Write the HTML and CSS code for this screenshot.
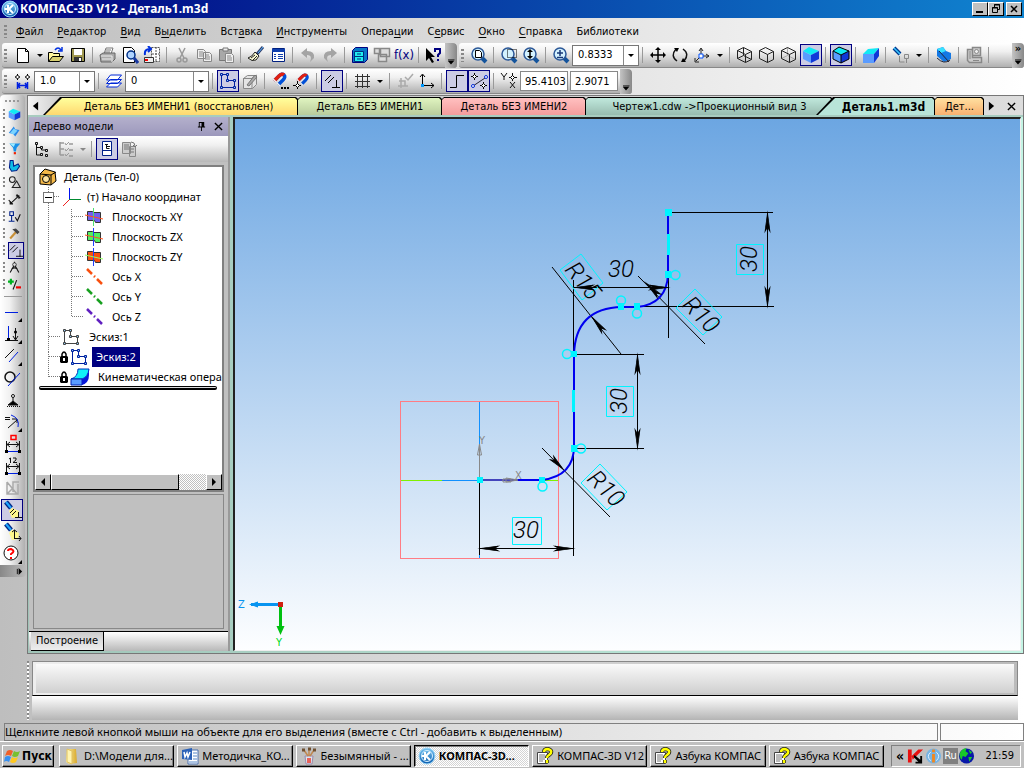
FILE: index.html
```html
<!DOCTYPE html>
<html lang="ru">
<head>
<meta charset="utf-8">
<title>КОМПАС-3D V12 - Деталь1.m3d</title>
<link rel="stylesheet" href="styles.css">
</head>
<body>
<svg class="sprite" aria-hidden="true">
<defs>
<linearGradient id="gb" x2="0" y2="1"><stop stop-color="#7cc8f4"/><stop offset="1" stop-color="#0a5cae"/></linearGradient>
<linearGradient id="gy"><stop stop-color="#fff4a8"/><stop offset="1" stop-color="#d8a82c"/></linearGradient>
<symbol id="logo" viewBox="0 0 18 18"><circle cx="9" cy="9" r="8" fill="url(#gb)" stroke="#9cd8fa"/><circle cx="9" cy="9" r="5.5" fill="none" stroke="#d4efff"/><path d="M7 5v8M12 5 8 9l4 4M4 9h3" stroke="#fff" stroke-width="2" fill="none"/></symbol>
<symbol id="new" viewBox="0 0 18 18"><path d="M3.500 2.500h8l3 3v11h-11z" fill="#fff" stroke="#000"/><path d="M11.500 2.500v3h3" fill="none" stroke="#000"/></symbol>
<symbol id="open" viewBox="0 0 18 18"><path d="M1.500 15.500v-9h4l1 1h6v3" fill="#fff79c" stroke="#000"/><path d="m1.500 15.500 4-5h11l-4 5z" fill="#d8d070" stroke="#000"/><path d="M8 4q3-4 6 0M15 1v4h-4" fill="none" stroke="#0030e0" stroke-width="1.500"/></symbol>
<symbol id="save" viewBox="0 0 18 18"><path d="M2.500 2.500h13v13h-13z" fill="#a09850" stroke="#000"/><path d="M5 3h8v6H5z" fill="#fff"/><path d="M5 11h8v4H5z" fill="#333"/><path d="M10 12h2v3h-2z" fill="#fff"/></symbol>
<symbol id="print" viewBox="0 0 18 18"><path d="m5 8 2-6h7l-2 6M7 4h5M6 6h5" fill="#fff" stroke="#777"/><path d="M1 9 4 7h12v6l-3 3H2z" fill="#aaa" stroke="#666"/><path d="M2 10h11M3 13h9M13 10v6" stroke="#eee"/></symbol>
<symbol id="preview" viewBox="0 0 18 18"><path d="M2.500 1.500h8l3 3v12h-11z" fill="#fff" stroke="#000"/><circle cx="10" cy="9" r="4" fill="#b0d4ff" stroke="#003088" stroke-width="1.500"/><path d="m13 12 4 5" stroke="#1838a0" stroke-width="3"/></symbol>
<symbol id="exch" viewBox="0 0 18 18"><path d="M8.500 1.500h8v14h-8zM13 1v15M9 8h7" fill="#fff" stroke="#555" stroke-dasharray="2 1"/><path d="M2 9q-1-6 5-6M5 0l3 3-3 3" fill="none" stroke="#0030e0" stroke-width="2"/><path d="M1.500 11.500h9v5h-9z" fill="#eee" stroke="#333"/><path d="M2 14h3" stroke="red" stroke-width="2"/></symbol>
<symbol id="cut" viewBox="0 0 18 18"><path d="M6 2l5 10M12 2 7 12" stroke="#999" stroke-width="1.500" fill="none"/><circle cx="6" cy="14" r="2" fill="none" stroke="#999" stroke-width="1.500"/><circle cx="12" cy="14" r="2" fill="none" stroke="#999" stroke-width="1.500"/></symbol>
<symbol id="copy" viewBox="0 0 18 18"><path d="M2.500 3.500h6l2 2v7h-8zM8.500 6.500h6l2 2v7h-8z" fill="#eee" stroke="#888"/><path d="M4 6h4M4 8h4M4 10h4M10 9h4M10 11h5M10 13h5" stroke="#888"/></symbol>
<symbol id="paste" viewBox="0 0 18 18"><path d="M2.500 3.500h12v11h-12z" fill="#a8a8a8" stroke="#777"/><path d="M6 2h5v3H6z" fill="#eee" stroke="#777"/><path d="M8.500 7.500h6l2 2v7h-8z" fill="#eee" stroke="#888"/><path d="M10 10h4M10 12h5M10 14h5" stroke="#888"/></symbol>
<symbol id="brush" viewBox="0 0 18 18"><path d="m16 1-6 7" stroke="#30406c" stroke-width="3"/><path d="m16 1-5 6" stroke="#5ab4ff"/><path d="m8 6 4 4-3 4q-4 2-8-2 4-1 7-6z" fill="#f8f8d0" stroke="#222"/><path d="m4 12 4-3M6 14l4-4" stroke="#222"/></symbol>
<symbol id="props" viewBox="0 0 18 18"><path d="M3.500 2.500h12v13h-12z" fill="#fff" stroke="#002080"/><path d="M3 3h13v3H3z" fill="#1040b0"/><path d="M5 8.500h2M5 10.500h2M5 12.500h2M9 8.500h5M9 10.500h5M9 12.500h5" stroke="#1040b0"/></symbol>
<symbol id="undo" viewBox="0 0 18 18"><path d="m2 7 6-5v3q8 0 7 7l-4 4q3-7-3-7v3z" fill="#a4a4a4"/></symbol>
<symbol id="redo" viewBox="0 0 18 18"><path d="m16 7-6-5v3q-8 0-7 7l4 4q-3-7 3-7v3z" fill="#a4a4a4"/></symbol>
<symbol id="manager" viewBox="0 0 18 18"><path d="m1.500 4.500 3-3h12v12l-3 3h-12z" fill="#0878c8" stroke="#000080"/><path d="M3.500 5.500h9v10h-9zM4 10.500h9" fill="#20f0f0" stroke="#003080"/><path d="M6 8h4M6 13h4" stroke="#003080"/></symbol>
<symbol id="lib" viewBox="0 0 18 18"><path d="M1.500 2.500h5v5h-5zM7.500 2.500h9v8h-9zM5.500 8.500h8v7h-8z" fill="#ddd" stroke="#888" stroke-width="1.500"/></symbol>
<symbol id="zoomd" viewBox="0 0 18 18"><path d="m11 11 5 5" stroke="#14549c" stroke-width="4"/><circle cx="8" cy="8" r="6" fill="#d4f2ff" stroke="#2c5898" stroke-width="1.500"/></symbol>
<symbol id="zall" viewBox="0 0 18 18"><use href="#zoomd"/><path d="M5.500 4.500h4l2 2v5h-6z" fill="#fff" stroke="#000"/></symbol>
<symbol id="zwin" viewBox="0 0 18 18"><use href="#zoomd"/><path d="M7.500 3.500h9v8h-9z" fill="none" stroke="#000" stroke-dasharray="1 1"/></symbol>
<symbol id="zdyn" viewBox="0 0 18 18"><use href="#zoomd"/><path d="M8 4v8" stroke="#000" stroke-width="1.500"/><path d="m8 3 3 3H5zM8 13l-3-3h6z"/></symbol>
<symbol id="zpm" viewBox="0 0 18 18"><use href="#zoomd"/><path d="M5 7h6M8 4v6M5 11.500h6" stroke="#183878" stroke-width="1.500"/></symbol>
<symbol id="help" viewBox="0 0 18 18"><path d="m1 2 9 9H6l3 5-2 1-3-5-3 3z"/><path d="M10 6V3h5v4l-2 2v2m0 2v2" fill="none" stroke="#000080" stroke-width="2"/></symbol>
<symbol id="move" viewBox="0 0 18 18"><path d="M2 9h14M9 2v14" stroke="#000" stroke-width="1.500"/><path d="m1 9 3-3v6zM17 9l-3-3v6zM9 1 6 4h6zM9 17l-3-3h6z"/></symbol>
<symbol id="rot" viewBox="0 0 18 18"><path d="M6 15Q-1 10 5 3M12 3q7 5 1 12" fill="none" stroke="#111" stroke-width="1.500"/><path d="M3 2h5l-2 4zM15 16h-5l2-4z"/></symbol>
<symbol id="axes" viewBox="0 0 18 18"><path d="M8 10V3M8 10h8M8 10l-5 5M6 5l2-3 2 3M13 8l3 2-3 2M2 12v4h4" fill="none" stroke="#222"/><path d="M6 8h4v4H6z" fill="#fff" stroke="#0050ff"/></symbol>
<symbol id="cw" viewBox="0 0 18 18"><path d="m1.500 4.500 6-3 8 4v8l-6 3-8-4zM1.500 4.500l8 4v8M9.500 8.500l6-3M7.500 1.500v8l8 4M7.500 9.500l-6 3" fill="none" stroke="#222"/></symbol>
<symbol id="ch" viewBox="0 0 18 18"><path d="m1.500 4.500 6-3 8 4v8l-6 3-8-4zM1.500 4.500l8 4v8M9.500 8.500l6-3" fill="none" stroke="#222"/></symbol>
<symbol id="cg" viewBox="0 0 18 18"><path d="M7.500 1.500v8l8 4M7.500 9.500l-6 3" stroke="#aaa" fill="none"/><use href="#ch"/></symbol>
<symbol id="cs" viewBox="0 0 18 18"><path d="m1 5 8 4v8l-8-4z" fill="#5a9cff"/><path d="m1 5 6-4 10 4-8 4z" fill="#12eaf4"/><path d="m9 9 8-4v8l-8 4z" fill="#1038d8"/></symbol>
<symbol id="ce" viewBox="0 0 18 18"><use href="#cs"/><path d="m1 5 6-4 10 4v8l-8 4-8-4zM1 5l8 4v8M9 9l8-4" fill="none" stroke="#000"/></symbol>
<symbol id="persp" viewBox="0 0 18 18"><path d="M1 8h11v9H1z" fill="#5a9cff"/><path d="m1 8 5-5 11-1-5 6z" fill="#12eaf4"/><path d="m12 8 5-6v8l-5 7z" fill="#1038d8"/></symbol>
<symbol id="light" viewBox="0 0 18 18"><path d="m2 2 6 6" stroke="#003890" stroke-width="4"/><path d="m2 2 6 6" stroke="#38c8ff" stroke-width="1.500"/><path d="M7.500 10v6h5M12.500 8.500h4v4h-4zM14.500 13v4" fill="none" stroke="#888"/></symbol>
<symbol id="view" viewBox="0 0 18 18"><path d="m2 3 6-2 3 4 5 2v6l-7 3-7-6z" fill="#1478e4"/><path d="m2 3 6-2 3 4-5 2z" fill="#38e0ff"/><path d="M2 12q7 7 13 2M4 5l10 11" fill="none" stroke="#223"/></symbol>
<symbol id="engine" viewBox="0 0 18 18"><path d="M2.500 3.500h5v8h9v5h-12l-2-2zM7.500 1.500h8v8h-8z" fill="#ccc" stroke="#888" stroke-width="1.500"/><path d="M5 5v8M8 14.500h6" stroke="#888"/><circle cx="11.500" cy="5.500" r="2" fill="#eee" stroke="#888"/></symbol>
<symbol id="step" viewBox="0 0 18 18"><path d="M1 5h5M3.500 2v6M11 5h5M13.500 2v6" stroke="#000"/><path d="m3.500 3 2 2-2 2-2-2zM13.500 3l2 2-2 2-2-2z" fill="#fff" stroke="#000"/><path d="M3.500 10v7M13.500 10v7M4 13.500h9M6 11l-2 2.500L6 16M11 11l2 2.500-2 2.500" fill="none" stroke="#0020e0" stroke-width="1.500"/></symbol>
<symbol id="layers" viewBox="0 0 18 18"><path d="m1.500 15 4-4h11l-4 4zM1.500 11.500l4-4h11l-4 4zM1.500 8l4-5h11l-4 5z" fill="#fff" stroke="#0028d8"/></symbol>
<symbol id="sketch" viewBox="0 0 18 18"><path d="M2.500 2.500h6v6h7v7h-13z" fill="none" stroke="currentColor"/><path d="M1.500 1.500h2v2h-2zM7.500 1.500h2v2h-2zM7.500 7.500h2v2h-2zM14.500 7.500h2v2h-2zM1.500 14.500h2v2h-2zM14.500 14.500h2v2h-2z" fill="#8ac8f4" stroke="currentColor"/></symbol>
<symbol id="editbox" viewBox="0 0 18 18"><path d="m2.500 6.500 4-3h9v9l-4 4h-9zM2 6.500h9v10M11 6l5-3" fill="#e4e4e4" stroke="#888"/><path d="M6 13 14 3l2 2-8 9z" fill="#aaa" stroke="#777"/></symbol>
<symbol id="magnet" viewBox="0 0 18 18"><path d="m3 9 5-5q3-3 5-1t-1 5l-5 5" fill="none" stroke="#0050d8" stroke-width="3.500"/><path d="m3 9 5-5q3-3 5-1" fill="none" stroke="#e02010" stroke-width="3.500"/><path d="m2 7 3 3M6 11l3 3" stroke="#eee" stroke-width="1.500"/></symbol>
<symbol id="mdots" viewBox="0 0 18 18"><use href="#magnet"/><path d="M10 16h2M13 16h2M16 16h2" stroke="#000" stroke-width="2"/></symbol>
<symbol id="mplus" viewBox="0 0 18 18"><use href="#magnet" x="2" width="16" height="18"/><path d="M0 13.500h8M4.500 9v8" stroke="#000"/><path d="m4.500 11.500 2 2-2 2-2-2z" fill="#fff" stroke="#000"/></symbol>
<symbol id="perp" viewBox="0 0 18 18"><path d="m2 9 6-6M5 11l6-6M9 15.500h8M13.500 8v8" stroke="#000" fill="none"/></symbol>
<symbol id="grid" viewBox="0 0 18 18"><path d="M4.500 2v14M9.500 2v14M14.500 2v14M2 4.500h15M2 9.500h15M2 14.500h15" stroke="#333"/></symbol>
<symbol id="lcs0" viewBox="0 0 18 18"><path d="M2 14h10M5 6v10M3 9h6v5M9 5l3 3 5-6" fill="none" stroke="#aaa" stroke-width="1.500"/></symbol>
<symbol id="lcs" viewBox="0 0 18 18"><path d="M4.500 14V3M4 13.500h12M2 5l2.500-3L7 5M13 11l3 2.500L13 16" fill="none" stroke="#000"/><path d="M3 12h3v3H3z" fill="#09f"/></symbol>
<symbol id="ortho" viewBox="0 0 18 18"><path d="M2 15.500h6.500v-12H16" fill="none" stroke="#000"/></symbol>
<symbol id="snap" viewBox="0 0 18 18"><path d="m3 14 12-8" stroke="#223"/><circle cx="3" cy="14" r="1.500" fill="#fff" stroke="#0028d8"/><circle cx="16" cy="5" r="1.500" fill="#fff" stroke="#0028d8"/><path d="M1 4.500h7M4.500 1v7M10 13.500h7M13.500 10v7" stroke="#000"/><path d="m4.500 2.500 2 2-2 2-2-2zM13.500 11.500l2 2-2 2-2-2z" fill="#fff" stroke="#000"/></symbol>
<symbol id="yx" viewBox="0 0 18 18"><path d="m1 1 3 4 3-4M4 5v3M10 10l5 6M15 10l-5 6M9 5.500h8M12.500 1v8" fill="none" stroke="#111"/><path d="m12.500 3.500 2 2-2 2-2-2z" fill="#fff" stroke="#000"/></symbol>
<symbol id="surf" viewBox="0 0 18 18"><path d="m1 11 7-9 2 4 6 1-6 9-3-4z" fill="#2888e8"/><path d="m3 11 5-6 5 3-5 5z" fill="#7ad4ff"/></symbol>
<symbol id="funnel" viewBox="0 0 18 18"><path d="M2 2h15l-5 6-1 5H8L7 8z" fill="#1890e8"/><path d="M2 2h8l-2 5z" fill="#9cecff"/><path d="M8 14h3v3H8z" fill="#f02000"/></symbol>
<symbol id="sheet" viewBox="0 0 18 18"><path d="M3 2h4l1 8 6-3 2 3-4 6-7 1-3-5z" fill="#10bce8" stroke="#001c88" stroke-width="1.500"/></symbol>
<symbol id="geom" viewBox="0 0 18 18"><circle cx="6" cy="5" r="4" fill="none" stroke="#222" stroke-width="1.500"/><path d="m12 7 5 9H6z" fill="none" stroke="#222" stroke-width="1.500"/></symbol>
<symbol id="dim" viewBox="0 0 18 18"><path d="M3 15 15 4M1 10l5 5M12 2l5 5M3 11v4h4M11 4h4v4" fill="none" stroke="#111" stroke-width="1.500"/></symbol>
<symbol id="mark" viewBox="0 0 18 18"><path d="M2.500 2.500h5v5h-5zM5 8v7M1 15.500h8" fill="none" stroke="#002088" stroke-width="1.500"/><path d="m10 10 3 5 4-9" fill="none" stroke="#111" stroke-width="1.500"/></symbol>
<symbol id="hammer" viewBox="0 0 18 18"><path d="M3 16 12 6" stroke="#c89038" stroke-width="3"/><path d="m6 3 5-1 5 5-3 3-4-4z" fill="#444"/></symbol>
<symbol id="compass" viewBox="0 0 18 18"><path d="M9 1v3M9 5 3 16M9 5l6 11M5 11q4-3 8 0" fill="none" stroke="#111" stroke-width="1.500"/><circle cx="9" cy="5" r="2.500" fill="#ddd" stroke="#111"/></symbol>
<symbol id="pm" viewBox="0 0 18 18"><path d="M0 5h8M4 1v8" stroke="#00b020" stroke-width="3"/><path d="M12 3 7 16" stroke="#111" stroke-width="1.500"/><path d="M11 13h7" stroke="#f00000" stroke-width="3"/></symbol>
<symbol id="cor" viewBox="0 0 22 22"><path d="M21 17v4h-4z"/></symbol>
<symbol id="l1" viewBox="0 0 22 22"><path d="M4 11.500h13" stroke="#0020e0"/><use href="#cor"/></symbol>
<symbol id="l2" viewBox="0 0 22 22"><path d="M7.500 3v14M14.500 5v13M4 17.500h13M12 13l2.500 4 2.500-4" fill="none" stroke="#111"/><path d="M7.500 3v12" stroke="#0020e0"/><circle cx="14.500" cy="9" r="1.500"/><path d="M6 15h3v3H6z"/><use href="#cor"/></symbol>
<symbol id="l3" viewBox="0 0 22 22"><path d="M4 13 13 4" stroke="#111"/><path d="m8 17 9-10" stroke="#0020e0"/><use href="#cor"/></symbol>
<symbol id="l4" viewBox="0 0 22 22"><circle cx="9" cy="10" r="5" fill="none" stroke="#111" stroke-width="1.500"/><path d="M7 19 19 6" stroke="#0020e0"/></symbol>
<symbol id="l5" viewBox="0 0 22 22"><path d="M12 8v4l-5 4h10l-5-4" stroke="#111"/><circle cx="12" cy="7" r="1.500" fill="#fff" stroke="#111"/><path d="M6 17.500h13" stroke="#111" stroke-dasharray="1 1"/></symbol>
<symbol id="l6" viewBox="0 0 22 22"><path d="M4 6.500h5M4 8.500h5M7 17l9-8M11 8h5v4" fill="none" stroke="#111"/><path d="M10 4q9 3 7 12" fill="none" stroke="#0020e0"/><use href="#cor"/></symbol>
<symbol id="l7" viewBox="0 0 22 22"><path d="M5.500 8v12M18.500 8v12M6 11.500h12M9 9l-3 2.500L9 14M15 9l3 2.500-3 2.500" fill="none" stroke="#111"/><path d="M6 18.500h12" stroke="#0020e0"/><path d="M4 17h3v3H4zM17 17h3v3h-3z"/></symbol>
<symbol id="l7a" viewBox="0 0 22 22"><use href="#l7"/><path d="M10 2.500h5v4h-5z" fill="none" stroke="red" stroke-width="1.500"/></symbol>
<symbol id="l8" viewBox="0 0 22 22"><use href="#l7"/><path d="m8 4 1.500-1v5M12 3h3v2l-3 2.500h4" fill="none" stroke="#111"/></symbol>
<symbol id="l9" viewBox="0 0 22 22"><path d="M6 5v12h11V7M6 17l6-6M6 5l10 12M12 15V5h6" fill="none" stroke="#aaa" stroke-width="1.500"/></symbol>
<symbol id="torch" viewBox="0 0 22 22"><path d="m11 9 7 3-1 6-6 1-3-7z" fill="#fff88c"/><path d="m5 3 5 6" stroke="#002888" stroke-width="5"/><path d="m5 3 5 6" stroke="#20a8ff" stroke-width="2"/></symbol>
<symbol id="l10" viewBox="0 0 22 22"><use href="#torch"/><path d="m9 14 4-4M11 16l4-4M14 18.500h7M17.500 13v6" stroke="#111"/></symbol>
<symbol id="l11" viewBox="0 0 22 22"><use href="#torch"/><path d="M13.500 18V9M13 17.500h7M11 11l2.500-2 2.500 2M18 15l2 2.500-2 2.500" fill="none" stroke="#111"/></symbol>
<symbol id="l12" viewBox="0 0 22 22"><circle cx="10" cy="10" r="7" fill="#fff" stroke="#111"/><path d="M7 8q0-2 3-2 5 2 0 5v1m0 2v2" fill="none" stroke="red" stroke-width="2"/><use href="#cor"/></symbol>
<symbol id="tree" viewBox="0 0 18 18"><path d="M4.500 4v11h5M5 7.500h3M9.500 8v2h5" fill="none" stroke="#111"/><path d="M3.500 2.500h2v2h-2zM8.500 6.500h2v2h-2zM13.500 9.500h2v2h-2zM8.500 13.500h2v2h-2zM13.500 14.500h2v2h-2z" fill="#ddd" stroke="#111"/></symbol>
<symbol id="list" viewBox="0 0 18 18"><path d="M3 2v13M3 3h4M3 9h4M3 15h4M12 4h4M12 10h4M12 16h4" stroke="#999" stroke-width="1.500"/><path d="m8 3 1 2 3-3M8 9l1 2 3-3M8 14l1 2 3-3" fill="none" stroke="#999"/></symbol>
<symbol id="split" viewBox="0 0 18 18"><path d="M4.500 1.500h9v14h-9zM5 10.500h9" fill="#fff" stroke="#002088"/><path d="M7 4.500h3M8.500 5v3.500h3M9 6.500h3" fill="none" stroke="#111"/></symbol>
<symbol id="rel" viewBox="0 0 18 18"><path d="M2.500 2.500h8v11h-8zM9.500 6.500h6v10h-6z" fill="#ccc" stroke="#888"/><path d="M4 5h5M4 7h5M4 9h5M11 9h3M11 12h3M11 2q4 0 4 4m-2-1 2 2 2-2" fill="none" stroke="#777"/></symbol>
<symbol id="part" viewBox="0 0 18 18"><path d="m1 6 5-5 10 3 1 9-5 4-11-1z" fill="#f4b848" stroke="#000"/><path d="m1 6 11 1 5-3M12 7v10" fill="none" stroke="#000"/><circle cx="7" cy="11" r="3.500" fill="#ffe4a0" stroke="#000"/></symbol>
<symbol id="origin" viewBox="0 0 18 18"><path d="M6.500 0v11" stroke="#0010f0"/><path d="M6 11.500h12" stroke="#008a30"/><path d="m6 12-6 6" stroke="#f02020"/></symbol>
<symbol id="plane" viewBox="0 0 18 18"><path d="M2.500 3.500h5l1 1h7v10h-5l-1-2h-7z" fill="currentColor" stroke="#333"/></symbol>
<symbol id="axis" viewBox="0 0 18 18"><path d="m2 1 5 5M9 8l1 1M12 11l5 5" stroke="currentColor" stroke-width="2.500"/></symbol>
<symbol id="lock" viewBox="0 0 8 14"><path d="M2 7V4q2-4 4 0v3" fill="none" stroke="#000" stroke-width="1.500"/><path d="M1 6h6l1 1v5l-1 1H1l-1-1V7z"/><path d="M3 8h2v3H3z" fill="#fff"/></symbol>
<symbol id="kin" viewBox="0 0 20 18"><path d="M1 11q7-2 7-10h11q-1 8-7 10z" fill="#10f0f8" stroke="#0030c0"/><path d="M1 11h11v6H1z" fill="#5a9cff" stroke="#0020b0"/><path d="M12 11q6-2 7-10v6q0 8-7 10z" fill="#0818d8"/></symbol>
<symbol id="win" viewBox="0 0 18 18"><path d="M3 4q3-2 6 0L7 9Q4 7 1 9z" fill="#f06028"/><path d="M10 4q3 2 6 0l-2 5q-3 2-6 0z" fill="#78c030"/><path d="M1 10q3-2 6 0l-2 5q-3-2-5 0z" fill="#3890f0"/><path d="M8 10q3 2 6 0l-2 5q-3 2-6 0z" fill="#ffc820"/></symbol>
<symbol id="folder" viewBox="0 0 18 18"><path d="M4 2h9l1 14-8 1-3-2z" fill="url(#gy)"/><path d="m4 2 5 2v13l-5-2z" fill="#fff4b0" stroke="#e0c060"/></symbol>
<symbol id="word" viewBox="0 0 18 18"><path d="M7 3h10v14H7z" fill="#fff" stroke="#4870b0"/><path d="M12 6h4M12 9h4M12 12h4M8 15h8" stroke="#5888c8"/><path d="m1 3 10-2v12L1 12z" fill="#2c62b8"/><path d="m3 5 1 5 2-4 1 4 2-5" fill="none" stroke="#fff" stroke-width="1.500"/></symbol>
<symbol id="paint" viewBox="0 0 18 18"><path d="M5 9h8l-1 8H6z" fill="#dce4ec" stroke="#98a"/><path d="M7 11h4v5H7z" fill="#e86058"/><path d="M8 9 4 3M9 9V2M10 9l4-6" stroke="#c08850" stroke-width="1.500"/><path d="M2 3h3M13 3h3M8 2h3" stroke="#705030" stroke-width="3"/></symbol>
<symbol id="hlp" viewBox="0 0 18 18"><path d="M1.500 5.500h10v11h-10z" fill="#fff" stroke="#444"/><path d="M3 8h6M3 10h6M3 12h6M3 14h4" stroke="#777"/><path d="M8 5q0-3 4-3 6 2 1 6-2 1-2 3m0 2v3" fill="none" stroke="#222" stroke-width="4"/><path d="M8 5q0-3 4-3 6 2 1 6-2 1-2 3m0 2v3" fill="none" stroke="#ff0" stroke-width="2.500"/></symbol>
<symbol id="kav" viewBox="0 0 18 18"><path d="M1 2h4v14H1zM5 9l7-7h5L6 13z" fill="#e81010"/><path d="m8 8 6 5V9h2v8H9v-2h3L7 10z"/></symbol>
<symbol id="info" viewBox="0 0 18 18"><circle cx="9" cy="9" r="8" fill="#78b4e4"/><path d="M6 5q-5 4 0 9M12 5q5 4 0 9" fill="none" stroke="#e4f4ff"/><path d="M9 2v3M9 7v9" stroke="#f08820" stroke-width="3"/></symbol>
<symbol id="globe" viewBox="0 0 18 18"><circle cx="9" cy="9" r="8" fill="#0818a8"/><path d="M3 4q3-4 6-3l-1 3 3 2-3 4-3-1-1 4q-3-3-2-7z" fill="#18c828"/><path d="M11 10h4l-3 5zM11 2l4 3-2 2z" fill="#18c828"/></symbol>
<path id="ar" d="m0 0-13-3.500 3 3.500-3 3.500z"/>
</defs>
</svg>

<div class="app">
<header class="title"><svg class="i"><use href="#logo"/></svg><h1>КОМПАС-3D V12 - Деталь1.m3d</h1>
<div class="winbtns"><button aria-label="Свернуть"><svg viewBox="0 0 14 12"><path d="M3 9h7" stroke="#000" stroke-width="2"/></svg></button><button aria-label="Восстановить"><svg viewBox="0 0 14 12"><path d="M5.500 4V1.500h5v5H9M3.500 4.500h5v5h-5zM5 2h6M3 5h6" fill="none" stroke="#000"/></svg></button><button class="x" aria-label="Закрыть"><svg viewBox="0 0 14 12"><path d="m4 3 6 6M10 3 4 9" stroke="#000" stroke-width="1.500"/></svg></button></div></header>

<nav class="menu"><i class="grip"></i><a href="#"><u>Ф</u>айл</a><a href="#"><u>Р</u>едактор</a><a href="#"><u>В</u>ид</a><a href="#">В<u>ы</u>делить</a><a href="#">Вст<u>а</u>вка</a><a href="#"><u>И</u>нструменты</a><a href="#">Опера<u>ц</u>ии</a><a href="#">С<u>е</u>рвис</a><a href="#"><u>О</u>кно</a><a href="#"><u>С</u>правка</a><a href="#">Библиотеки</a></nav>

<div class="bars">
<div class="bar"><i class="grip"></i>
<button aria-label="Создать"><svg class="i"><use href="#new"/></svg></button><i class="dd"></i>
<button aria-label="Открыть"><svg class="i"><use href="#open"/></svg></button>
<button aria-label="Сохранить"><svg class="i"><use href="#save"/></svg></button><i class="sep"></i>
<button aria-label="Печать"><svg class="i"><use href="#print"/></svg></button>
<button aria-label="Предварительный просмотр"><svg class="i"><use href="#preview"/></svg></button>
<button aria-label="Обмен"><svg class="i"><use href="#exch"/></svg></button><i class="sep"></i>
<button aria-label="Вырезать"><svg class="i"><use href="#cut"/></svg></button>
<button aria-label="Копировать"><svg class="i"><use href="#copy"/></svg></button>
<button aria-label="Вставить"><svg class="i"><use href="#paste"/></svg></button><i class="sep"></i>
<button aria-label="Копировать свойства"><svg class="i"><use href="#brush"/></svg></button>
<button aria-label="Свойства"><svg class="i"><use href="#props"/></svg></button><i class="sep"></i>
<button aria-label="Отменить"><svg class="i"><use href="#undo"/></svg></button>
<button aria-label="Повторить"><svg class="i"><use href="#redo"/></svg></button><i class="sep"></i>
<button aria-label="Менеджер"><svg class="i"><use href="#manager"/></svg></button>
<button aria-label="Библиотеки"><svg class="i"><use href="#lib"/></svg></button>
<button class="fx">f(x)</button><i class="sep"></i>
<button aria-label="Что это"><svg class="i"><use href="#help"/></svg></button><i class="more"></i></div>
<div class="bar grow"><i class="grip"></i>
<button aria-label="Показать все"><svg class="i"><use href="#zall"/></svg></button><i class="sep"></i>
<button aria-label="Увеличить рамкой"><svg class="i"><use href="#zwin"/></svg></button>
<button aria-label="Приблизить"><svg class="i"><use href="#zdyn"/></svg></button><i class="sep"></i>
<button aria-label="Масштаб"><svg class="i"><use href="#zpm"/></svg></button>
<span class="combo w66"><select aria-label="Текущий масштаб"><option>0.8333</option></select></span><i class="sep"></i>
<button aria-label="Сдвинуть"><svg class="i"><use href="#move"/></svg></button>
<button aria-label="Повернуть"><svg class="i"><use href="#rot"/></svg></button>
<button aria-label="Ориентация"><svg class="i"><use href="#axes"/></svg></button><i class="dd wide"></i><i class="sep"></i>
<button aria-label="Каркас"><svg class="i"><use href="#cw"/></svg></button>
<button aria-label="Без невидимых линий"><svg class="i"><use href="#ch"/></svg></button>
<button aria-label="Невидимые линии тонкие"><svg class="i"><use href="#cg"/></svg></button>
<button class="on" aria-label="Полутоновое"><svg class="i"><use href="#cs"/></svg></button><i class="sep"></i>
<button class="on" aria-label="Полутоновое с каркасом"><svg class="i"><use href="#ce"/></svg></button><i class="sep"></i>
<button aria-label="Перспектива"><svg class="i"><use href="#persp"/></svg></button><i class="sep"></i>
<button aria-label="Подсветка"><svg class="i"><use href="#light"/></svg></button><i class="dd wide"></i><i class="sep"></i>
<button aria-label="Перестроить"><svg class="i"><use href="#view"/></svg></button><i class="sep"></i>
<button aria-label="Сборка"><svg class="i"><use href="#engine"/></svg></button><i class="sep"></i><i class="more end"></i></div>
</div>

<div class="bars">
<div class="bar"><i class="grip"></i>
<button aria-label="Шаг курсора"><svg class="i"><use href="#step"/></svg></button>
<span class="combo w60"><select aria-label="Шаг"><option>1.0</option></select></span><i class="sep"></i>
<button aria-label="Слои"><svg class="i"><use href="#layers"/></svg></button>
<span class="combo w84"><select aria-label="Слой"><option>0</option></select></span><i class="sep"></i>
<button class="on" aria-label="Эскиз"><svg class="i blue"><use href="#sketch"/></svg></button>
<button aria-label="Разместить эскиз"><svg class="i"><use href="#editbox"/></svg></button><i class="sep"></i>
<button aria-label="Настройка привязок"><svg class="i"><use href="#mdots"/></svg></button>
<button aria-label="Привязки"><svg class="i"><use href="#mplus"/></svg></button><i class="sep"></i>
<button class="on" aria-label="Ограничения"><svg class="i"><use href="#perp"/></svg></button><i class="sep"></i>
<button aria-label="Сетка"><svg class="i"><use href="#grid"/></svg></button><i class="dd wide"></i><i class="sep"></i>
<button aria-label="Управление СК"><svg class="i"><use href="#lcs0"/></svg></button>
<button aria-label="Локальная СК"><svg class="i"><use href="#lcs"/></svg></button><i class="sep"></i>
<button class="on" aria-label="Ортогональное черчение"><svg class="i"><use href="#ortho"/></svg></button>
<button class="on" aria-label="Округление"><svg class="i"><use href="#snap"/></svg></button><i class="sep"></i>
<span class="ico"><svg class="i"><use href="#yx"/></svg></span>
<input aria-label="X" value="95.4103"><input aria-label="Y" value="2.9071"><i class="more"></i></div>
</div>

<main>
<aside class="side">
<div class="strip">
<i class="hgrip"></i>
<button class="s" aria-label="Редактирование детали"><svg class="i"><use href="#cs"/></svg></button><button class="s" aria-label="Пространственные кривые"><svg class="i"><use href="#surf"/></svg></button><button class="s" aria-label="Фильтры"><svg class="i"><use href="#funnel"/></svg></button><button class="s" aria-label="Листовое тело"><svg class="i"><use href="#sheet"/></svg></button><button class="s" aria-label="Геометрия"><svg class="i"><use href="#geom"/></svg></button><button class="s" aria-label="Размеры"><svg class="i"><use href="#dim"/></svg></button><button class="s" aria-label="Обозначения"><svg class="i"><use href="#mark"/></svg></button><button class="s" aria-label="Редактирование"><svg class="i"><use href="#hammer"/></svg></button><button class="s sel" aria-label="Параметризация"><svg class="i"><use href="#perp"/></svg></button><button class="s" aria-label="Измерения"><svg class="i"><use href="#compass"/></svg></button><button class="s" aria-label="Выделение"><svg class="i"><use href="#pm"/></svg></button>
<i class="hline"></i>
<button aria-label="Горизонталь"><svg><use href="#l1"/></svg></button><button aria-label="Выравнивание"><svg><use href="#l2"/></svg></button><button aria-label="Параллельность"><svg><use href="#l3"/></svg></button><button aria-label="Касание"><svg><use href="#l4"/></svg></button><button aria-label="Фиксация"><svg><use href="#l5"/></svg></button><button aria-label="Равенство"><svg><use href="#l6"/></svg></button><button aria-label="Фиксировать размер"><svg><use href="#l7a"/></svg></button><button aria-label="Значение размера"><svg><use href="#l8"/></svg></button><button aria-label="Параметризовать"><svg><use href="#l9"/></svg></button><button class="on" aria-label="Показать ограничения"><svg><use href="#l10"/></svg></button><button aria-label="Степени свободы"><svg><use href="#l11"/></svg></button><button aria-label="Справка по ограничениям"><svg><use href="#l12"/></svg></button>
</div><div class="endcap"><svg viewBox="0 0 8 8"><path d="M1.500 1v6" stroke="#000"/><path d="m3 0 4 4-4 4z"/></svg></div>
</aside>

<section class="doc">
<div class="tabs"><button class="arr" aria-label="Назад"><svg viewBox="0 0 8 10"><path d="M7 0v10L1 5z"/></svg></button>
<button class="tab slant yellow"><span>Деталь БЕЗ ИМЕНИ1 (восстановлен)</span></button><button class="tab green"><span>Деталь БЕЗ ИМЕНИ1</span></button><button class="tab pink"><span>Деталь БЕЗ ИМЕНИ2</span></button><button class="tab teal"><span>Чертеж1.cdw -&gt;Проекционный вид 3</span></button><button class="tab slant active"><span>Деталь1.m3d</span></button><button class="tab orange"><span>Дет...</span></button>
<button class="arr r" aria-label="Вперёд"><svg viewBox="0 0 8 10"><path d="M1 0v10l6-5z"/></svg></button><button class="arr c" aria-label="Закрыть документ"><svg viewBox="0 0 8 10"><path d="m0 1 8 8M8 1 0 9" stroke="#000" stroke-width="1.500"/></svg></button></div>
<div class="work">
<section class="panel">
<div class="phead"><h2>Дерево модели</h2><svg viewBox="0 0 10 10"><path d="M2 0h6v5h1v1H5.500v4h-1V6H1V5h1zM3 1v4h2V1z" fill-rule="evenodd"/></svg><svg viewBox="0 0 10 10"><path d="m1 1 8 8M9 1 1 9" stroke="#000" stroke-width="1.500"/></svg></div>
<div class="ptools"><button aria-label="Дерево"><svg class="i"><use href="#tree"/></svg></button><button aria-label="Состав"><svg class="i"><use href="#list"/></svg></button><i class="dd dim"></i><i class="sep"></i><button class="on" aria-label="Отношения"><svg class="i"><use href="#split"/></svg></button><button aria-label="Окно дерева"><svg class="i"><use href="#rel"/></svg></button></div>
<div class="box treebox">
<div class="tree">
<svg class="guides"><path d="M13.500 20v165M36.500 42v108M19 29.500h6M37 49.500h12M37 69.500h12M37 89.500h12M37 109.500h12M37 129.500h12M37 149.500h12M14 169.500h12M14 189.500h11M14 209.500h11M13.500 185v25" fill="none" stroke="#777" stroke-dasharray="1 1"/></svg>
<ul>
<li class="l0"><svg class="i"><use href="#part"/></svg><span>Деталь (Тел-0)</span></li>
<li class="l1"><i class="exp"></i><svg class="i"><use href="#origin"/></svg><span>(т) Начало координат</span></li>
<li class="l2"><svg class="i pv"><use href="#plane"/><path d="M8.500 0v18" stroke="#50e070"/><path d="m0 7 18 4" stroke="#ff5020"/></svg><span>Плоскость XY</span></li>
<li class="l2"><svg class="i pg"><use href="#plane"/><path d="M8.500 0v18" stroke="#2040ff"/><path d="m0 7 18 4" stroke="#ff5020"/></svg><span>Плоскость ZX</span></li>
<li class="l2"><svg class="i po"><use href="#plane"/><path d="M8.500 0v18" stroke="#2040ff"/><path d="m0 7 18 4" stroke="#90ff60"/></svg><span>Плоскость ZY</span></li>
<li class="l2"><svg class="i po"><use href="#axis"/></svg><span>Ось X</span></li>
<li class="l2"><svg class="i ag"><use href="#axis"/></svg><span>Ось Y</span></li>
<li class="l2"><svg class="i av"><use href="#axis"/></svg><span>Ось Z</span></li>
<li class="l3"><svg class="i gray"><use href="#sketch"/></svg><span>Эскиз:1</span></li>
<li class="l4"><svg class="lock"><use href="#lock"/></svg><svg class="i blue"><use href="#sketch"/></svg><span class="hl">Эскиз:2</span></li>
<li class="l4"><svg class="lock"><use href="#lock"/></svg><svg class="kin"><use href="#kin"/></svg><span>Кинематическая операция</span></li>
</ul>
<div class="stop"></div>
</div>
<div class="scroll"><button aria-label="Влево"><svg viewBox="0 0 8 10"><path d="M6 1v8L2 5z"/></svg></button><i class="thumb"></i><i class="track"></i><button aria-label="Вправо"><svg viewBox="0 0 8 10"><path d="M2 1v8l4-4z"/></svg></button></div>
</div>
<div class="box lower"></div>
<div class="ptabs"><button>Построение</button></div>
</section>

<div class="view">
<svg class="canvas" aria-label="Эскиз"><g transform="translate(-235 -119)" fill="none" stroke="#000">
<path d="M401 480.500h158" stroke="#80f000"/><path d="M442 480.500h38M479.500 402v156" stroke="#1090ff"/>
<path d="M479.500 480v75M573.500 352v204M479 548.500h95M574 354.500h70M574 448.500h70M637.500 354v94M574 287.500h94M573.500 280v74M669 212.500h104M767.500 212v94M636 306.500h138M668.500 212v126M552 267l69 87M638 276l67 68M542 448l68 69"/>
<rect x="400.500" y="401.500" width="158" height="157" stroke="#ff7c84" shape-rendering="crispEdges"/>
<path d="M480 480h62q32-4 32-34V355q1-47 48-48h15q30-3 31-33v-62" stroke="#0000f0" stroke-width="2"/>
<path d="M573.500 390v22M668.500 234v21" stroke="#00f4ff" stroke-width="3"/>
<path d="M480 480h37M479.500 480v-36" stroke="#888"/><path d="m518 480-12-2v4zM479.500 444l-2 11h4zM503 479h8v3h-8z" stroke="#888"/>
<g fill="#00f4ff" stroke="none"><path d="M477 477h6v6h-6zM539 477h6v6h-6zM571 445h6v7h-6zM571 351h6v6h-6zM618 303h6v7h-6zM634 303h6v7h-6zM665 271h6v7h-6zM665 209h7v7h-7z"/></g>
<g stroke="#00f4ff" stroke-width="1.500"><circle cx="542.500" cy="486.500" r="4.500"/><circle cx="581" cy="448.500" r="4.500"/><circle cx="567" cy="354" r="4.500"/><circle cx="621" cy="300.500" r="4.500"/><circle cx="637" cy="313.500" r="4.500"/><circle cx="675.500" cy="275" r="4.500"/></g>
<g fill="#000" stroke="#000"><use href="#ar" transform="translate(480 548.500) rotate(180) scale(1.400 .7)"/><use href="#ar" transform="translate(573 548.500) scale(1.400 .7)"/><use href="#ar" transform="translate(637.500 355) rotate(-90) scale(1.400 .7)"/><use href="#ar" transform="translate(637.500 448) rotate(90) scale(1.400 .7)"/><use href="#ar" transform="translate(767.500 213) rotate(-90) scale(1.400 .7)"/><use href="#ar" transform="translate(767.500 306) rotate(90) scale(1.400 .7)"/><use href="#ar" transform="translate(575 287.500) rotate(180) scale(1.400 .7)"/><use href="#ar" transform="translate(668 287.500) scale(1.400 .7)"/><use href="#ar" transform="translate(563 469) rotate(45) scale(1.200 .7)"/><use href="#ar" transform="translate(592 317) rotate(-129) scale(1.400 .7)"/><use href="#ar" transform="translate(646 283) rotate(-135) scale(1.400 .7)"/></g>
<path d="M512.500 517.500h29v27h-29zM606.500 386.500h27v30h-27zM736.500 244.500h27v30h-27zM600 464l27 28-20 18-26-27zM695 289l27 28-19 18-27-27zM581 254l22 29-21 17-22-30z" stroke="#00f4ff"/>
<g class="dims"><text x="513" y="538">30</text><text x="608" y="277">30</text><text transform="translate(627 414) rotate(-90)">30</text><text transform="translate(757 272) rotate(-90)">30</text><text transform="translate(586 480) rotate(45)">R10</text><text transform="translate(681 306) rotate(45)">R10</text><text transform="translate(564 270) rotate(51)">R15</text></g>
<g class="axl"><text x="479" y="444" fill="#888">Y</text><text x="515" y="479" fill="#888">X</text><text x="238" y="608" fill="#0894f0">Z</text><text x="276" y="646" fill="#00d820">Y</text></g>
<path d="M279 604.500h-28" stroke="#0894f0" stroke-width="3"/><path d="m249 604.500 9-3v6z" fill="#0894f0" stroke="none"/><path d="M280.500 606v24" stroke="#00c010" stroke-width="3"/><path d="m280.500 635-4-9h8z" fill="#00c010" stroke="none"/><path d="M278 602h5v5h-5z" fill="#d02010" stroke="none"/>
</g></svg></div>
</div>
</section>
</main>

<section class="prop"><i class="vgrip"></i><div class="pcol"><div class="pbox"><div></div></div><div class="pbar"></div></div></section>

<footer class="status"><p>Щелкните левой кнопкой мыши на объекте для его выделения (вместе с Ctrl - добавить к выделенным)</p><p class="st2"></p></footer>

<footer class="task"><button class="start"><svg class="i"><use href="#win"/></svg>Пуск</button>
<div class="tasks"><button><svg class="i"><use href="#folder"/></svg>D:\Модели для...</button><button><svg class="i"><use href="#word"/></svg>Методичка_КО...</button><button><svg class="i"><use href="#paint"/></svg>Безымянный - ...</button><button class="cur"><svg class="i"><use href="#logo"/></svg>КОМПАС-3D...</button><button><svg class="i"><use href="#hlp"/></svg>КОМПАС-3D V12</button><button><svg class="i"><use href="#hlp"/></svg>Азбука КОМПАС</button><button><svg class="i"><use href="#hlp"/></svg>Азбука КОМПАС</button></div>
<div class="tray"><b>«</b><svg class="i"><use href="#kav"/></svg><svg class="i"><use href="#info"/></svg><span class="lang">Ru</span><svg class="i"><use href="#globe"/></svg><time>21:59</time></div></footer>
</div>
</body>
</html>
```

FILE: styles.css
```css
* { box-sizing: border-box; }
body { margin: 0; font: 11px/14px "DejaVu Sans Condensed", "DejaVu Sans", sans-serif; color: #000; }
button, input, select { font: inherit; color: inherit; margin: 0; padding: 0; border: 0; background: none; border-radius: 0; }
button { display: flex; align-items: center; justify-content: center; flex: none; }
svg { display: block; flex: none; }
a { color: inherit; text-decoration: none; }
h1, h2, p, ul { margin: 0; padding: 0; list-style: none; }
.sprite { position: absolute; width: 0; height: 0; }
.i { width: 18px; height: 18px; overflow: visible; }
.blue { color: #0020a0; }
.gray { color: #444; }

.app { height: 100vh; display: flex; flex-direction: column; background: linear-gradient(90deg, #bebebe, #fff); overflow: hidden; }

.title { display: flex; align-items: center; height: 18px; flex: none; padding: 0 2px 0 1px; gap: 1px; background: linear-gradient(90deg, #000080, #1084d0); color: #fff; }
.title h1 { font: bold 12px/18px "Noto Sans", sans-serif; flex: 1; white-space: nowrap; }
.winbtns { display: flex; }
.winbtns button { width: 16px; height: 14px; background: #c0c0c0; border: 1px solid; border-color: #fff #000 #000 #fff; }
.winbtns svg { width: 14px; height: 12px; }
.winbtns .x { margin-left: 2px; }

.menu { display: flex; align-items: center; gap: 14px; height: 25px; flex: none; padding: 2px 0 0 4px; }
.menu .grip { margin-right: -5px; }
.menu u { text-underline-offset: 2px; }
.grip { width: 3px; height: 13px; flex: none; background: repeating-linear-gradient(#888 0 2px, transparent 2px 4px); }

.bars { display: flex; gap: 2px; flex: none; height: 26px; padding-left: 2px; }
.bar { display: flex; align-items: center; height: 25px; padding-left: 2px; border-bottom: 1px solid #888; border-radius: 3px; background: linear-gradient(#fff, #f0f0f0 35%, #b0b0b0); }
.bar .grip { margin-right: 5px; }
.grow .grip { margin-right: 4px; }
.bar button, .ico { width: 22px; height: 22px; }
.ico { display: flex; align-items: center; justify-content: center; }
.grow { flex: 1; }
.on { background: #cccce4; border: 1px solid #000080; }
.sep { width: 8px; height: 16px; flex: none; background: linear-gradient(#999, #999) 3px 0 / 1px 100% no-repeat; }
.dd { width: 11px; height: 22px; flex: none; display: flex; align-items: center; justify-content: center; }
.dd::before, .combo::after { content: ""; border: 3px solid transparent; border-top-color: #000; border-bottom: 0; }
.wide { width: 13px; }
.dim::before { border-top-color: #888; }
.bar .fx { font-size: 13px; color: #000080; }
.more { width: 12px; height: 25px; flex: none; background: linear-gradient(90deg, #c4c4c4, #888); border-radius: 0 4px 4px 0; display: flex; flex-direction: column; align-items: center; justify-content: flex-end; padding-bottom: 3px; }
.more::before { content: ""; width: 7px; height: 6px; background: #000; clip-path: polygon(0 0, 100% 0, 100% 1px, 0 1px, 0 2px, 100% 2px, 50% 100%, 0 2px); }
.end { margin-left: auto; justify-content: space-between; }
.end::after { content: "»"; order: -1; font-style: normal; font-weight: bold; line-height: 12px; }
.combo { display: flex; align-items: center; height: 21px; background: #fff; border: 1px solid #777; flex: none; }
.combo select { appearance: none; flex: 1; min-width: 0; height: 19px; padding-left: 5px; border-right: 1px solid #888; }
.combo::after { margin: 0 4px; }
.w66 { width: 67px; }
.w60 { width: 61px; }
.w84 { width: 84px; }
.bar input { width: 48px; height: 20px; margin-right: 2px; padding-left: 4px; background: #fff; border: 1px solid #888; }

main { flex: 1; min-height: 0; display: flex; }
.side { width: 27px; flex: none; }
.strip { width: 25px; padding-left: 1px; background: linear-gradient(90deg, #fff, #f0f0f0 40%, #b0b0b0); border-radius: 4px 4px 0 0; }
.strip button { width: 22px; height: 22px; }
.strip button svg { width: 22px; height: 22px; }
.strip .s { width: 24px; height: 17px; justify-content: flex-start; padding-left: 2px; gap: 3px; }
.strip .s::before { content: ""; width: 2px; height: 11px; background: repeating-linear-gradient(#888 0 2px, transparent 2px 4px); }
.strip .s svg { width: 13px; height: 13px; }
.strip .sel svg { width: 16px; height: 17px; background: #cccce4; outline: 1px solid #000080; outline-offset: -1px; }
.hgrip { display: block; height: 11px; margin: 0 4px; background: repeating-linear-gradient(90deg, #999 0 2px, transparent 2px 4px) 0 5px / 100% 2px no-repeat; }
.hline { display: block; height: 8px; margin: 0 3px; background: linear-gradient(#999, #999) 0 3px / 100% 1px no-repeat; }
.endcap { width: 26px; height: 12px; display: flex; align-items: center; justify-content: flex-end; padding-right: 3px; background: linear-gradient(90deg, #888, #bbb); border-radius: 0 0 4px 0; }
.endcap svg { width: 7px; height: 7px; }

.doc { flex: 1; min-width: 0; display: flex; flex-direction: column; border: 1px solid #777; margin-bottom: 1px; background: linear-gradient(90deg, #a0c4b8, #c4f4e4); }
.tabs { display: flex; align-items: stretch; height: 21px; padding-top: 1px; flex: none; background: linear-gradient(90deg, #f4f4f4, #c4c4c4 4%, #ddd); border-bottom: 2px solid #a8ccc0; }
.arr { width: 15px; }
.arr svg { width: 7px; height: 10px; }
.c { flex: 1 0 22px; }
.c svg { width: 9px; height: 9px; }
.tab { position: relative; flex: 0 1 144px; padding: 1px 2px 0; background: #000; clip-path: polygon(2px 0, calc(100% - 2px) 0, 100% 2px, 100% 100%, 0 100%, 0 2px); white-space: nowrap; }
.tab::before { content: ""; position: absolute; inset: 1px 1px 0 0; background: var(--c); clip-path: inherit; }
.tab span { position: relative; }
.slant { clip-path: polygon(17px 0, calc(100% - 2px) 0, 100% 2px, 100% 100%, 0 100%); padding-left: 18px; }
.slant::before { left: 2px; }
.yellow { --c: linear-gradient(#ffff9c, #ffd870); flex-basis: 255px; }
.green { --c: linear-gradient(#e0f4c0, #b8cc9c); }
.pink { --c: linear-gradient(#ffc0c0, #f49c9c); }
.teal { --c: linear-gradient(#c0e8dc, #98bcb0); flex-basis: 247px; }
.active { --c: #b8e4d8; flex-basis: 119px; margin-left: -17px; font-weight: bold; font-size: 12px; }
.orange { --c: linear-gradient(#ffe0a0, #f8b070); flex-basis: 49px; }

.work { flex: 1; min-height: 0; display: flex; padding: 0 2px 2px 1px; }
.panel { width: 201px; flex: none; display: flex; flex-direction: column; background: #c0c0c0; border-right: 2px solid #999; }
.phead { display: flex; align-items: center; gap: 8px; height: 19px; padding: 0 5px 0 4px; background: linear-gradient(#b4b0cc, #9c98bc); }
.phead h2 { flex: 1; font-size: 11px; font-weight: normal; }
.phead svg { width: 9px; height: 9px; }
.ptools { display: flex; align-items: center; height: 26px; padding-left: 1px; background: linear-gradient(#fff, #f0f0f0 35%, #b8b8b8); }
.ptools button { width: 22px; height: 22px; }
.ptools > :nth-child(2) { margin-left: 3px; }
.box { border: 2px solid #808080; margin: 0 4px 0 4px; }
.treebox { flex: 327 1 0; min-height: 0; margin-top: 3px; display: flex; flex-direction: column; background: #fff; }
.tree { position: relative; flex: 1; min-height: 0; overflow: hidden; }
.guides { position: absolute; left: 0; top: 0; width: 100%; height: 100%; }
.tree ul { position: relative; font-family: "Noto Sans", sans-serif; }
.tree li { display: flex; align-items: center; height: 20px; white-space: nowrap; }
.l0 { padding-left: 4px; gap: 7px; }
.l1 { padding-left: 8px; gap: 6px; }
.l1 .i { margin-left: 3px; }
.l2 { padding-left: 50px; gap: 9px; }
.l3 { padding-left: 27px; gap: 9px; }
.l4 { padding-left: 25px; gap: 2px; }
.l4 span { padding: 3px 4px; margin-left: 2px; }
.hl { background: #000080; color: #fff; }
.exp { width: 11px; height: 11px; border: 1px solid #777; background: linear-gradient(#000, #000) 1px 4px / 7px 1px no-repeat #fff; }
.lock { width: 8px; height: 14px; }
.kin { width: 20px; height: 18px; }
.pv { color: #7060f0; }
.pg { color: #50f060; }
.po { color: #f85010; }
.ag { color: #18a020; }
.av { color: #6020c0; }
.stop { position: relative; height: 4px; margin: -1px 5px 0 4px; border: 1px solid #000; border-width: 1px 1px 2px; border-radius: 2px; background: #ddd; }
.scroll { display: flex; height: 16px; flex: none; background: repeating-conic-gradient(#c0c0c0 0 25%, #fff 0 50%) 0 0 / 2px 2px; }
.scroll button, .thumb { width: 16px; background: #c0c0c0; border: 1px solid; border-color: #fff #000 #000 #fff; }
.scroll svg { width: 8px; height: 10px; }
.thumb { flex: 128; }
.track { flex: 28; }
.lower { flex: 135 1 0; margin-top: 2px; margin-bottom: 2px; border: 1px solid #888; }
.ptabs { display: flex; height: 20px; flex: none; border-top: 1px solid #000; background: linear-gradient(#fff, #b8b8b8); padding-left: 2px; }
.ptabs button { width: 73px; background: linear-gradient(#ccc, #eee); border: 1px solid #000; border-width: 0 1px 1px 0; }
.view { flex: 1; min-width: 0; margin-left: 3px; border: 1px solid #000; border-color: #222 #eee #eee #222; border-width: 2px 1px 1px 2px; background: linear-gradient(#6ca6e2, #fdfeff); }
.canvas { width: 100%; height: 100%; }
.dims { font: italic 300 24px Roboto, sans-serif; fill: #000; stroke: none; }
.axl { font: 11px "DejaVu Sans Condensed", sans-serif; stroke: none; }

.prop { display: flex; gap: 3px; height: 59px; flex: none; margin: 6px 6px 3px 27px; }
.vgrip { width: 2px; background: repeating-linear-gradient(#888 0 2px, #fff 2px 4px); }
.pcol { flex: 1; display: flex; flex-direction: column; }
.pbox { height: 35px; padding: 2px 3px; background: linear-gradient(90deg, #eee, #bbb); border: 1px solid #888; border-bottom-color: #000; }
.pbox div { height: 29px; background: linear-gradient(#fafafa, #d0d0d0); }
.pbar { flex: 1; background: linear-gradient(#fff, #b4b4b4); }

.status { display: flex; gap: 2px; height: 18px; flex: none; padding-left: 4px; }
.status p { flex: 1; border: 1px solid #808080; line-height: 16px; white-space: nowrap; overflow: hidden; font-family: "Noto Sans", sans-serif; }
.status .st2 { flex: 0 0 84px; }

.task { display: flex; align-items: center; height: 27px; flex: none; padding: 2px 3px 0 2px; background: #c0c0c0; border-top: 1px solid #fff; gap: 5px; }
.task button { height: 22px; border: 1px solid; border-color: #fff #000 #000 #fff; box-shadow: inset -1px -1px #808080; white-space: nowrap; }
.task .start { width: 52px; font-weight: bold; font-size: 12px; }
.tasks { display: flex; flex: 1; gap: 3px; min-width: 0; font-family: "Noto Sans", sans-serif; }
.tasks button { flex: 1; min-width: 0; justify-content: flex-start; gap: 3px; padding-left: 3px; overflow: hidden; }
.task .cur { font-weight: bold; border-color: #000 #fff #fff #000; box-shadow: inset 1px 1px #808080; background: repeating-conic-gradient(#d4d4d4 0 25%, #fff 0 50%) 0 0 / 2px 2px; }
.tray { display: flex; align-items: center; width: 130px; height: 22px; margin-left: 2px; padding: 0 6px 0 4px; border: 1px solid; border-color: #808080 #fff #fff #808080; }
.tray b { font-size: 14px; margin-right: 3px; }
.tray .i { width: 17px; margin-right: 1px; }
.lang { background: #808080; color: #fff; line-height: 16px; padding: 0 1px; }
.tray time { margin-left: auto; }
```
